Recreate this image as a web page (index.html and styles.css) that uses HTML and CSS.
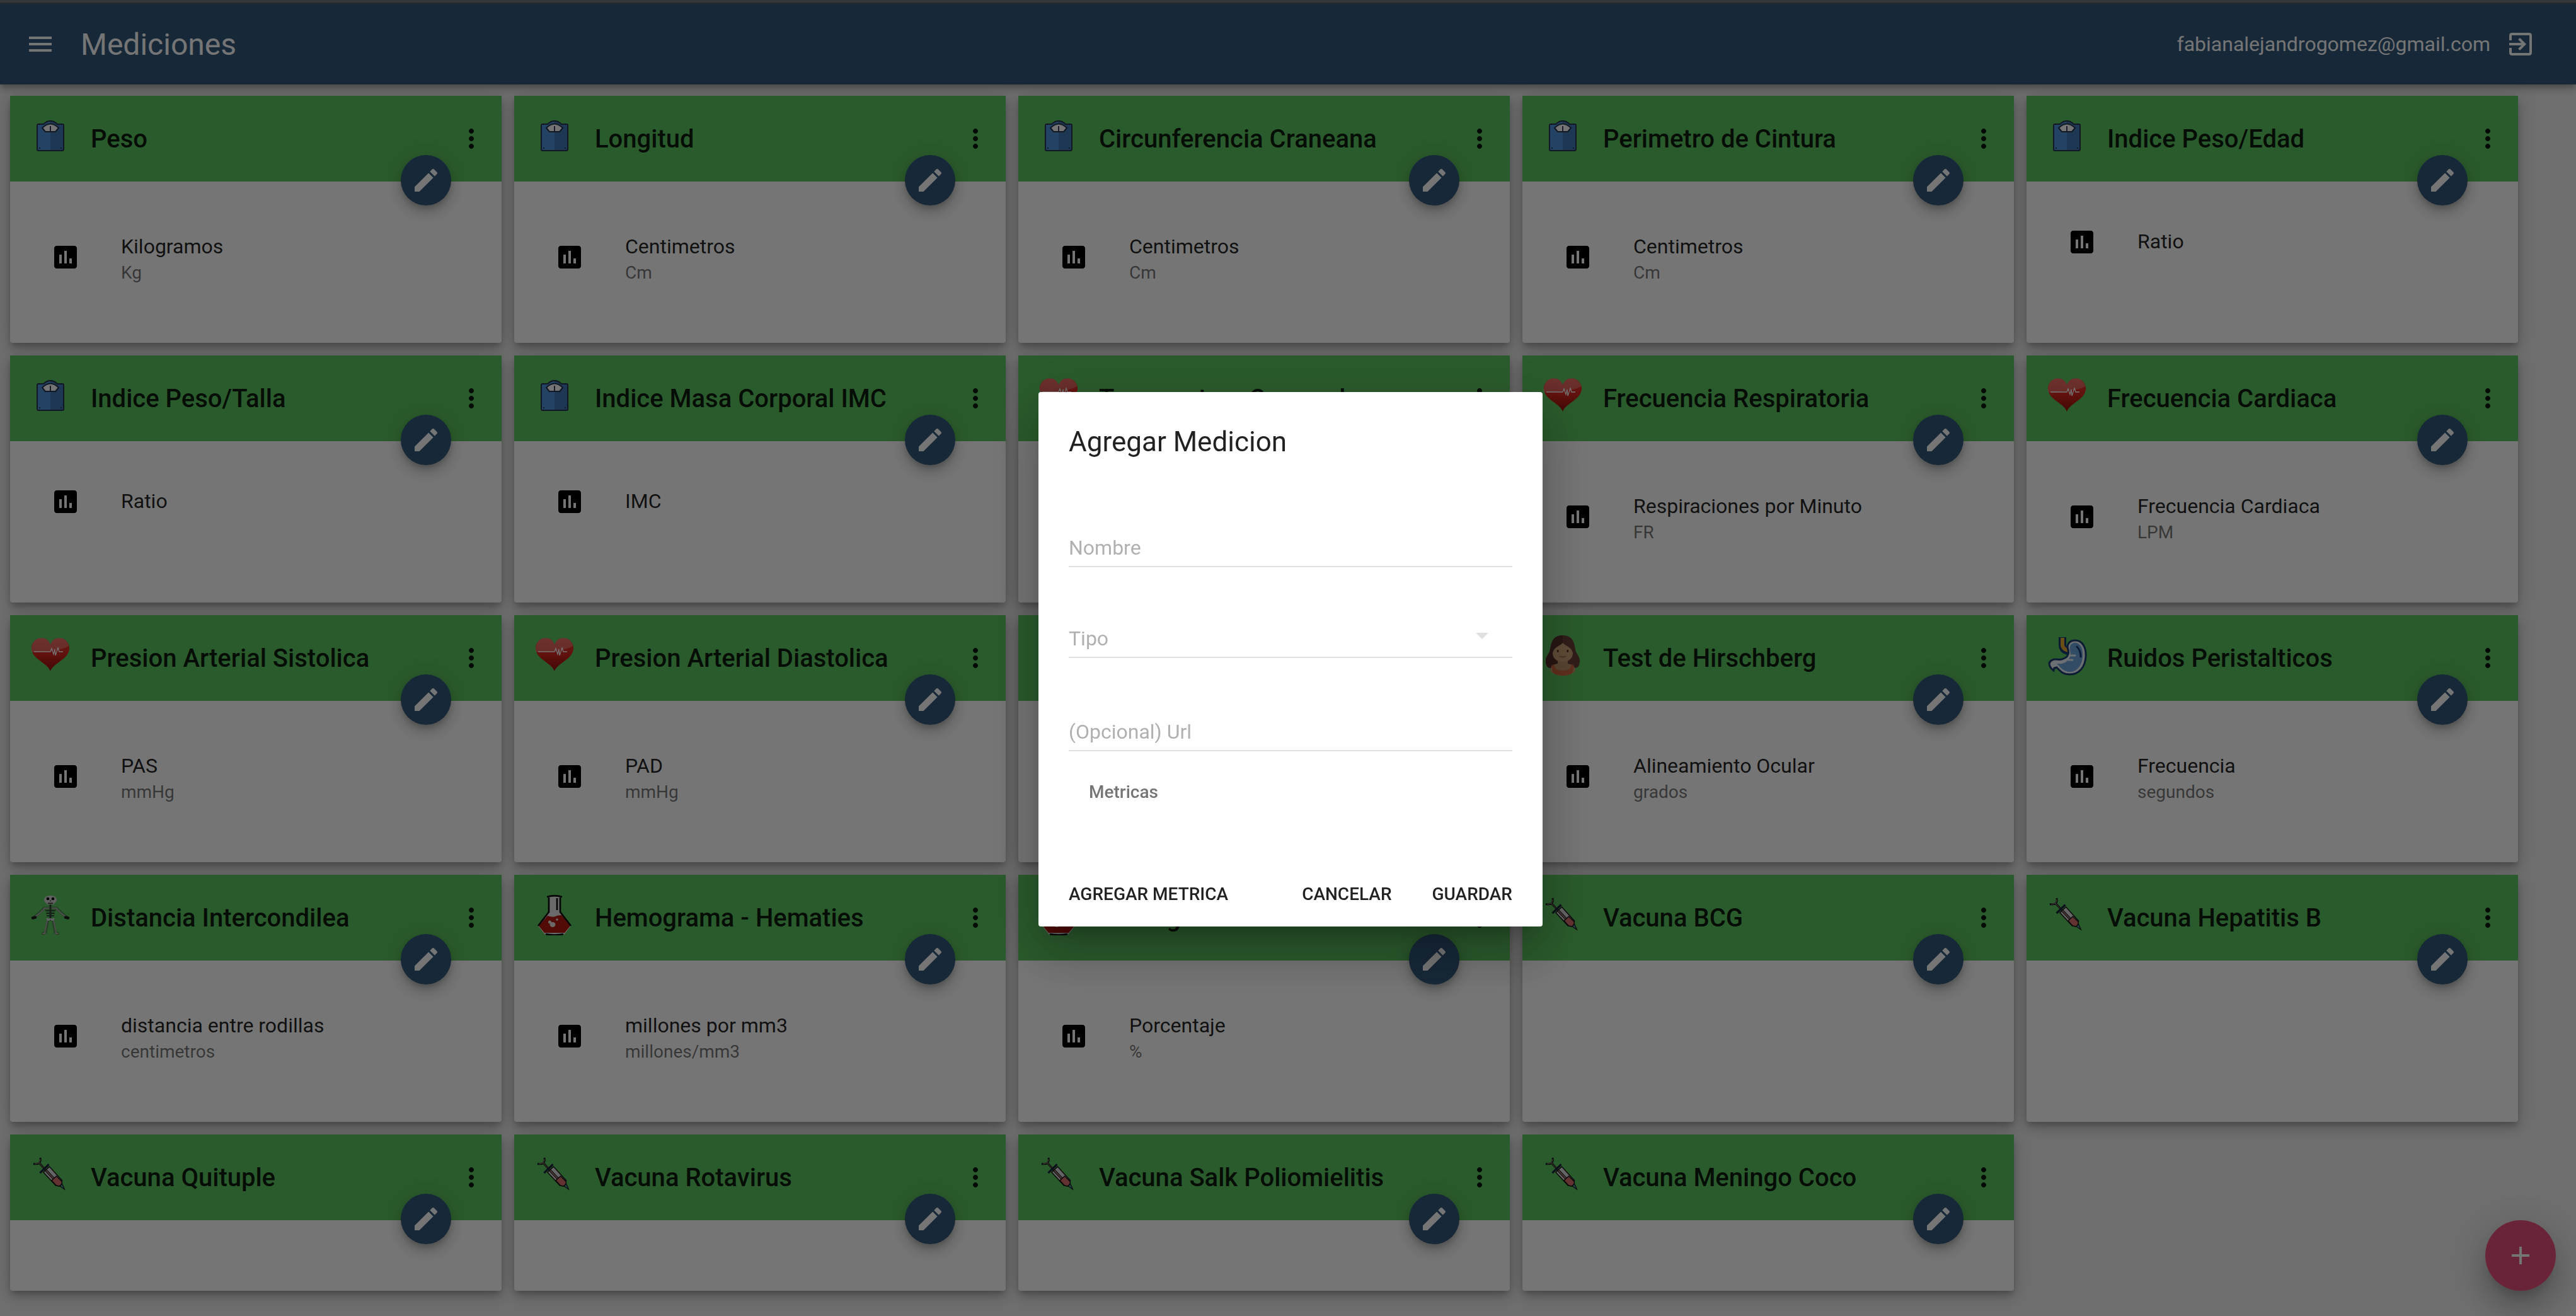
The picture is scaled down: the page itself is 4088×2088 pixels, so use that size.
FILE: index.html
```html
<!DOCTYPE html>
<html lang="es">
<head>
<meta charset="utf-8">
<title>Mediciones</title>
<link rel="stylesheet" href="styles.css">
</head>
<body>
<svg class="sprite" aria-hidden="true">
  <symbol id="menu" viewBox="0 0 24 24"><path d="M3 18h18v-2H3v2zm0-5h18v-2H3v2zm0-7v2h18V6H3z"/></symbol>
  <symbol id="exit" viewBox="0 0 24 24"><path d="M10.09 15.59L11.5 17l5-5-5-5-1.41 1.41L12.67 11H3v2h9.67l-2.58 2.59zM19 3H5c-1.11 0-2 .9-2 2v4h2V5h14v14H5v-4H3v4c0 1.1.89 2 2 2h14c1.1 0 2-.9 2-2V5c0-1.1-.9-2-2-2z"/></symbol>
  <symbol id="more" viewBox="0 0 24 24"><path d="M12 8c1.1 0 2-.9 2-2s-.9-2-2-2-2 .9-2 2 .9 2 2 2zm0 2c-1.1 0-2 .9-2 2s.9 2 2 2 2-.9 2-2-.9-2-2-2zm0 6c-1.1 0-2 .9-2 2s.9 2 2 2 2-.9 2-2-.9-2-2-2z"/></symbol>
  <symbol id="edit" viewBox="0 0 24 24"><path d="M3 17.25V21h3.75L17.81 9.94l-3.75-3.75L3 17.25zM20.71 7.04c.39-.39.39-1.02 0-1.41l-2.34-2.34c-.39-.39-1.02-.39-1.41 0l-1.83 1.83 3.75 3.75 1.83-1.83z"/></symbol>
  <symbol id="chart" viewBox="0 0 24 24"><path d="M19 3H5c-1.1 0-2 .9-2 2v14c0 1.1.9 2 2 2h14c1.1 0 2-.9 2-2V5c0-1.1-.9-2-2-2zM9 17H7v-7h2v7zm4 0h-2V7h2v10zm4 0h-2v-4h2v4z"/></symbol>
  <symbol id="add" viewBox="0 0 24 24"><path d="M19 13h-6v6h-2v-6H5v-2h6V5h2v6h6v2z"/></symbol>

  <symbol id="scale" viewBox="0 0 64 64">
    <path d="M13 13h8c3-3 6-5 11-5s8 2 11 5h8q2 0 2 2v38q0 2-2 2H13q-2 0-2-2V15q0-2 2-2z" fill="#5090d8"/>
    <path d="M32 8c5 0 8 2 11 5h8q2 0 2 2v38q0 2-2 2H32z" fill="#4279b8"/>
    <path d="M13 13h8c3-3 6-5 11-5s8 2 11 5h8q2 0 2 2v38q0 2-2 2H13q-2 0-2-2V15q0-2 2-2z" fill="none" stroke="#25354e" stroke-width="2"/>
    <path d="M19 19q13-13 26 0l-5 6H24z" fill="#fff" stroke="#25354e" stroke-width="2" stroke-linejoin="round"/>
    <path d="M32 16v9M15 50v2M49 50v2" stroke="#25354e" stroke-width="1.8"/>
  </symbol>
  <symbol id="heart" viewBox="0 0 64 64">
    <linearGradient id="heartRed" x1="0" y1="0" x2="0" y2="1"><stop offset="0" stop-color="#e83a30"/><stop offset=".5" stop-color="#d3261e"/><stop offset="1" stop-color="#8d120c"/></linearGradient>
    <path d="M32 57C28 44 4 39 2 22C1 14 8 4 17 4.500C26 4 30 9 32 15C34 9 38 4 47 4.500C56 4 63 14 62 22C60 39 36 44 32 57z" fill="url(#heartRed)"/>
    <path d="M2 25C1 14 8 4 17 4.500C26 4 30 9 32 15C34 9 38 4 47 4.500C54 4 60 11 61 17C46 26 25 24 2 27z" fill="#fff" opacity=".25"/>
    <path d="M6 26h26l2-5 3 9 2-8 1 10 4-12 2 6h6" fill="none" stroke="#fff" stroke-width="1.300"/>
  </symbol>
  <symbol id="girl" viewBox="0 0 64 64">
    <path d="M32 0C18 0 14 9 12 22c-1 8-7 10-7 18 0 5 1 12 8 12h38c7 0 8-7 8-12 0-8-6-10-7-18C50 9 46 0 32 0z" fill="#6a4038"/>
    <path d="M32 0C18 0 14 9 12 22c-1 8-7 10-7 18 0 5 1 12 8 12h19z" fill="#55302c"/>
    <path d="M24 36h16v9q12 1 12 12-8 7-20 7t-20-7q0-11 12-12z" fill="#c0946a"/>
    <path d="M32 12C28 17 18 18 16 28c0 10 8 14 16 14s16-4 16-14C46 18 36 17 32 12z" fill="#cfa478"/>
    <path d="M18 46c2 7 3 10 14 10s12-3 14-10l4 2-3 12q-6 4-15 4t-15-4l-3-12z" fill="#d0663c"/>
    <path d="M27 33q5 3 10 0" fill="none" stroke="#a0704c" stroke-width="2"/>
    <ellipse cx="24.200" cy="25" rx="1.300" ry="2" fill="#38201c"/><ellipse cx="39.800" cy="25" rx="1.300" ry="2" fill="#38201c"/>
  </symbol>
  <symbol id="stomach" viewBox="0 0 64 64">
    <path d="M25 3v12q0 8 9 10" fill="none" stroke="#1c3b72" stroke-width="12"/>
    <path d="M25 4v12q1 6 9 8" fill="none" stroke="#e8ab36" stroke-width="6"/>
    <path d="M34 23C31 15 36 8 45 8c12 0 18 12 17 26C61 52 50 62 37 62c-12 0-15-5-21-11l-4 1-1 4C7 53 4 50 4 44c5-10 14-4 20-6 8-2 12-7 10-15z" fill="#eef3fa" stroke="#1c3b72" stroke-width="3"/>
    <path d="M37 24c-2-8 4-13 9-12 9 1 12 11 11 22-1 15-10 24-20 24-10 0-15-7-21-13 9 1 14-1 18-6 3-3 5-9 3-15z" fill="#6ba5da"/>
    <path d="M48 18q6 6 6 16" fill="none" stroke="#1c3b72" stroke-width="3" stroke-linecap="round"/>
    <path d="M36 32h9M35 39h6" stroke="#eef3fa" stroke-width="3" stroke-linecap="round"/>
  </symbol>
  <symbol id="skeleton" viewBox="0 0 64 64">
    <g fill="none" stroke-linecap="round" stroke-linejoin="round">
      <path d="M32 15v24M22 21h20M22 21l-9 9-8 6M42 21l9 9 8 6M28 40l-4 20-4 1M36 40l4 20 4 1" stroke="#4a8a4e" stroke-width="4.500"/>
      <path d="M25 25h14M26 29h12M27 33h10M32 15v24" stroke="#34423a" stroke-width="2"/>
      <path d="M22 21h7M35 21h7M22 22l-8 8-6 4M42 22l8 8 6 4M27 41l-2 9-2 10M37 41l2 9 2 10M20 61h4M40 61h4M28 38h8" stroke="#a4aaa4" stroke-width="2.200"/>
      <path d="M4 36.500l4-1M56 35.500l4 1" stroke="#1c241e" stroke-width="4.500"/>
    </g>
    <path d="M32 1c-7 0-10 3-10 7 0 3 3 4 5 7h10c2-3 5-4 5-7 0-4-3-7-10-7z" fill="#d2d2d2"/>
    <circle cx="28" cy="6" r="2.300"/><circle cx="36" cy="6" r="2.300"/><path d="M31 10l1-2 1 2zM28 12.500h8v1.200h-8z"/>
    <path d="M25 37h14l-2 4h-3l-2-2-2 2h-3z" fill="#d2d2d2"/>
  </symbol>
  <symbol id="flask" viewBox="0 0 64 64">
    <path d="M22 2h20v3h-1v22l17 22-10 13q-16 4-32 0L6 49l17-22V5h-1z" fill="#e6e6e6"/>
    <path d="M21 33q8 3 12 1t10-2l14 17-9 11H16L7 49z" fill="#b4180f"/>
    <path d="M23 4v23L6 49M41 4v23l17 22M36 5v19" fill="none" stroke="#0a0a0a" stroke-width="2.600"/>
    <path d="M20 3q12-3.500 24 0M18 62q14 3 28 0" fill="none" stroke="#0a0a0a" stroke-width="2.600"/>
    <ellipse cx="29" cy="47" rx="4.500" ry="4" fill="#e6e6e6"/><circle cx="24.500" cy="43" r="2.500" fill="#e6e6e6"/><circle cx="36" cy="39" r="1.700" fill="#e6e6e6"/>
  </symbol>
  <symbol id="syringe" viewBox="0 0 64 64">
    <path d="M5 14.500q6 1 9-1t2-8.500M14 13l11 12" fill="none" stroke="#141414" stroke-width="3"/>
    <path d="M7 14.500q5 0 7-1.500t2-6M14 13l11 12" fill="none" stroke="#a98c90" stroke-width="1"/>
    <path d="M21 28l9.500-9 20 22-1 6-3 3-6-1z" fill="#dcdcdc" stroke="#141414" stroke-width="1.500"/>
    <path d="M25 25l15 16" stroke="#141414" stroke-width="4"/><path d="M25 25l15 16" stroke="#c98c8c" stroke-width="1.600"/>
    <path d="M34 41l7.500-7 9 9-1 4-3 3-5-1z" fill="#d8706e" stroke="#141414" stroke-width="1.300"/>
    <path d="M47 50l3.500-4 4 9z" fill="#4e93a8" stroke="#141414" stroke-width="1.200"/>
    <path d="M15.500 29L29.500 15.500" stroke="#18263a" stroke-width="3.200"/>
  </symbol>
</svg>

<div class="browser-edge"></div>
<header class="toolbar">
  <svg class="icon"><use href="#menu"/></svg>
  <h1 class="toolbar-title">Mediciones</h1>
  <span class="toolbar-user">fabianalejandrogomez@gmail.com</span>
  <svg class="icon"><use href="#exit"/></svg>
</header>

<main class="grid">
  <article class="card"><header class="card-head"><svg class="avatar"><use href="#scale"/></svg><h2>Peso</h2><svg class="icon"><use href="#more"/></svg><button class="edit"><svg class="icon"><use href="#edit"/></svg></button></header>
    <div class="metric"><svg class="icon"><use href="#chart"/></svg><div><p>Kilogramos</p><small>Kg</small></div></div></article>
  <article class="card"><header class="card-head"><svg class="avatar"><use href="#scale"/></svg><h2>Longitud</h2><svg class="icon"><use href="#more"/></svg><button class="edit"><svg class="icon"><use href="#edit"/></svg></button></header>
    <div class="metric"><svg class="icon"><use href="#chart"/></svg><div><p>Centimetros</p><small>Cm</small></div></div></article>
  <article class="card"><header class="card-head"><svg class="avatar"><use href="#scale"/></svg><h2>Circunferencia Craneana</h2><svg class="icon"><use href="#more"/></svg><button class="edit"><svg class="icon"><use href="#edit"/></svg></button></header>
    <div class="metric"><svg class="icon"><use href="#chart"/></svg><div><p>Centimetros</p><small>Cm</small></div></div></article>
  <article class="card"><header class="card-head"><svg class="avatar"><use href="#scale"/></svg><h2>Perimetro de Cintura</h2><svg class="icon"><use href="#more"/></svg><button class="edit"><svg class="icon"><use href="#edit"/></svg></button></header>
    <div class="metric"><svg class="icon"><use href="#chart"/></svg><div><p>Centimetros</p><small>Cm</small></div></div></article>
  <article class="card"><header class="card-head"><svg class="avatar"><use href="#scale"/></svg><h2>Indice Peso/Edad</h2><svg class="icon"><use href="#more"/></svg><button class="edit"><svg class="icon"><use href="#edit"/></svg></button></header>
    <div class="metric single"><svg class="icon"><use href="#chart"/></svg><div><p>Ratio</p></div></div></article>

  <article class="card"><header class="card-head"><svg class="avatar"><use href="#scale"/></svg><h2>Indice Peso/Talla</h2><svg class="icon"><use href="#more"/></svg><button class="edit"><svg class="icon"><use href="#edit"/></svg></button></header>
    <div class="metric single"><svg class="icon"><use href="#chart"/></svg><div><p>Ratio</p></div></div></article>
  <article class="card"><header class="card-head"><svg class="avatar"><use href="#scale"/></svg><h2>Indice Masa Corporal IMC</h2><svg class="icon"><use href="#more"/></svg><button class="edit"><svg class="icon"><use href="#edit"/></svg></button></header>
    <div class="metric single"><svg class="icon"><use href="#chart"/></svg><div><p>IMC</p></div></div></article>
  <article class="card"><header class="card-head"><svg class="avatar"><use href="#heart"/></svg><h2>Temperatura Corporal</h2><svg class="icon"><use href="#more"/></svg></header></article>
  <article class="card"><header class="card-head"><svg class="avatar"><use href="#heart"/></svg><h2>Frecuencia Respiratoria</h2><svg class="icon"><use href="#more"/></svg><button class="edit"><svg class="icon"><use href="#edit"/></svg></button></header>
    <div class="metric"><svg class="icon"><use href="#chart"/></svg><div><p>Respiraciones por Minuto</p><small>FR</small></div></div></article>
  <article class="card"><header class="card-head"><svg class="avatar"><use href="#heart"/></svg><h2>Frecuencia Cardiaca</h2><svg class="icon"><use href="#more"/></svg><button class="edit"><svg class="icon"><use href="#edit"/></svg></button></header>
    <div class="metric"><svg class="icon"><use href="#chart"/></svg><div><p>Frecuencia Cardiaca</p><small>LPM</small></div></div></article>

  <article class="card"><header class="card-head"><svg class="avatar"><use href="#heart"/></svg><h2>Presion Arterial Sistolica</h2><svg class="icon"><use href="#more"/></svg><button class="edit"><svg class="icon"><use href="#edit"/></svg></button></header>
    <div class="metric"><svg class="icon"><use href="#chart"/></svg><div><p>PAS</p><small>mmHg</small></div></div></article>
  <article class="card"><header class="card-head"><svg class="avatar"><use href="#heart"/></svg><h2>Presion Arterial Diastolica</h2><svg class="icon"><use href="#more"/></svg><button class="edit"><svg class="icon"><use href="#edit"/></svg></button></header>
    <div class="metric"><svg class="icon"><use href="#chart"/></svg><div><p>PAD</p><small>mmHg</small></div></div></article>
  <article class="card"><header class="card-head"></header></article>
  <article class="card"><header class="card-head"><svg class="avatar"><use href="#girl"/></svg><h2>Test de Hirschberg</h2><svg class="icon"><use href="#more"/></svg><button class="edit"><svg class="icon"><use href="#edit"/></svg></button></header>
    <div class="metric"><svg class="icon"><use href="#chart"/></svg><div><p>Alineamiento Ocular</p><small>grados</small></div></div></article>
  <article class="card"><header class="card-head"><svg class="avatar"><use href="#stomach"/></svg><h2>Ruidos Peristalticos</h2><svg class="icon"><use href="#more"/></svg><button class="edit"><svg class="icon"><use href="#edit"/></svg></button></header>
    <div class="metric"><svg class="icon"><use href="#chart"/></svg><div><p>Frecuencia</p><small>segundos</small></div></div></article>

  <article class="card"><header class="card-head"><svg class="avatar"><use href="#skeleton"/></svg><h2>Distancia Intercondilea</h2><svg class="icon"><use href="#more"/></svg><button class="edit"><svg class="icon"><use href="#edit"/></svg></button></header>
    <div class="metric"><svg class="icon"><use href="#chart"/></svg><div><p>distancia entre rodillas</p><small>centimetros</small></div></div></article>
  <article class="card"><header class="card-head"><svg class="avatar"><use href="#flask"/></svg><h2>Hemograma - Hematies</h2><svg class="icon"><use href="#more"/></svg><button class="edit"><svg class="icon"><use href="#edit"/></svg></button></header>
    <div class="metric"><svg class="icon"><use href="#chart"/></svg><div><p>millones por mm3</p><small>millones/mm3</small></div></div></article>
  <article class="card"><header class="card-head"><svg class="avatar"><use href="#flask"/></svg><h2>Hemograma - Hematocrito</h2><svg class="icon"><use href="#more"/></svg><button class="edit"><svg class="icon"><use href="#edit"/></svg></button></header>
    <div class="metric"><svg class="icon"><use href="#chart"/></svg><div><p>Porcentaje</p><small>%</small></div></div></article>
  <article class="card"><header class="card-head"><svg class="avatar"><use href="#syringe"/></svg><h2>Vacuna BCG</h2><svg class="icon"><use href="#more"/></svg><button class="edit"><svg class="icon"><use href="#edit"/></svg></button></header></article>
  <article class="card"><header class="card-head"><svg class="avatar"><use href="#syringe"/></svg><h2>Vacuna Hepatitis B</h2><svg class="icon"><use href="#more"/></svg><button class="edit"><svg class="icon"><use href="#edit"/></svg></button></header></article>

  <article class="card"><header class="card-head"><svg class="avatar"><use href="#syringe"/></svg><h2>Vacuna Quituple</h2><svg class="icon"><use href="#more"/></svg><button class="edit"><svg class="icon"><use href="#edit"/></svg></button></header></article>
  <article class="card"><header class="card-head"><svg class="avatar"><use href="#syringe"/></svg><h2>Vacuna Rotavirus</h2><svg class="icon"><use href="#more"/></svg><button class="edit"><svg class="icon"><use href="#edit"/></svg></button></header></article>
  <article class="card"><header class="card-head"><svg class="avatar"><use href="#syringe"/></svg><h2>Vacuna Salk Poliomielitis</h2><svg class="icon"><use href="#more"/></svg><button class="edit"><svg class="icon"><use href="#edit"/></svg></button></header></article>
  <article class="card"><header class="card-head"><svg class="avatar"><use href="#syringe"/></svg><h2>Vacuna Meningo Coco</h2><svg class="icon"><use href="#more"/></svg><button class="edit"><svg class="icon"><use href="#edit"/></svg></button></header></article>
</main>

<button class="fab"><svg class="icon"><use href="#add"/></svg></button>

<div class="backdrop">
  <section class="dialog">
    <h2 class="dialog-title">Agregar Medicion</h2>
    <div class="field">Nombre</div>
    <div class="field select">Tipo<span class="caret"></span></div>
    <div class="field url">(Opcional) Url</div>
    <h3 class="dialog-sub">Metricas</h3>
    <footer class="dialog-actions"><span>AGREGAR METRICA</span><span class="push">CANCELAR</span><span>GUARDAR</span></footer>
  </section>
</div>
</body>
</html>
```
FILE: styles.css
```css
* { box-sizing: border-box; }
body {
  margin: 0;
  height: 2088px;
  overflow: hidden;
  background: #f0f0f0;
  font-family: Roboto, "Liberation Sans", sans-serif;
  color: rgba(0, 0, 0, .87);
}
h1, h2, h3, p { margin: 0; }
button { border: 0; padding: 0; }
.sprite { position: absolute; width: 0; height: 0; }
.icon { width: 48px; height: 48px; fill: currentColor; flex: none; }

.browser-edge {
  position: relative;
  z-index: 30;
  height: 6px;
  background: #35363a;
  border-bottom: 2px solid #26292b;
}

.toolbar {
  position: relative;
  height: 128px;
  padding: 0 64px 0 40px;
  display: flex;
  align-items: center;
  background: #32577a;
  color: #fff;
  box-shadow: 0 4px 8px -2px rgba(0,0,0,.2), 0 8px 10px rgba(0,0,0,.14), 0 2px 20px rgba(0,0,0,.12);
}
.toolbar-title { margin-left: 40px; font-size: 48px; font-weight: 400; }
.toolbar-user { margin-left: auto; margin-right: 24px; font-size: 32px; }

.grid {
  padding: 18px 0 0 16px;
  display: grid;
  grid-template-columns: repeat(5, 780px);
  grid-template-rows: repeat(4, 392px) 248px;
  gap: 20px;
}
.card {
  background: #fff;
  border-radius: 4px;
  box-shadow: 0 6px 10px -2px rgba(0,0,0,.2), 0 10px 18px rgba(0,0,0,.14), 0 2px 32px rgba(0,0,0,.12);
}
.card-head {
  position: relative;
  height: 136px;
  padding: 0 24px 0 32px;
  display: flex;
  align-items: center;
  background: #5dc660;
}
.avatar { width: 64px; height: 64px; margin: 0 32px 8px 0; flex: none; }
.card-head h2 { flex: 1; font-size: 40px; font-weight: 500; white-space: nowrap; }
.edit, .fab { display: grid; place-items: center; border-radius: 50%; color: #fff; }
.edit {
  position: absolute;
  right: 80px;
  bottom: -38px;
  width: 80px;
  height: 80px;
  background: #32577a;
  box-shadow: 0 6px 10px -2px rgba(0,0,0,.2), 0 12px 20px rgba(0,0,0,.14), 0 2px 36px rgba(0,0,0,.12);
}
.metric {
  margin-top: 48px;
  height: 144px;
  padding-left: 64px;
  display: flex;
  align-items: center;
  gap: 64px;
}
.metric .icon { color: #000; }
.metric p { font-size: 32px; line-height: 42px; }
.metric small { display: block; font-size: 28px; line-height: 42px; color: rgba(0,0,0,.54); }
.metric > div { padding-top: 8px; }
.metric.single { height: 96px; }
.metric.single > div { padding: 0 0 2px; }

.fab {
  position: fixed;
  right: 32px;
  bottom: 40px;
  width: 112px;
  height: 112px;
  background: #e64f7a;
  box-shadow: 0 16px 20px -10px rgba(0,0,0,.2), 0 32px 48px 4px rgba(0,0,0,.14), 0 12px 60px 10px rgba(0,0,0,.12);
}

.backdrop {
  position: fixed;
  inset: 0;
  z-index: 20;
  padding: 4px 0 0 8px;
  display: grid;
  place-items: center;
  background: rgba(0, 0, 0, .54);
}
.dialog {
  width: 800px;
  height: 848px;
  padding: 0 48px;
  display: flex;
  flex-direction: column;
  background: #fff;
  border-radius: 4px;
  box-shadow: 0 22px 30px -14px rgba(0,0,0,.2), 0 48px 76px 6px rgba(0,0,0,.14), 0 18px 92px 16px rgba(0,0,0,.12);
}
.dialog-title { font-size: 44px; font-weight: 400; line-height: 158px; }
.field {
  height: 64px;
  margin-top: 56px;
  padding-top: 4px;
  display: flex;
  align-items: center;
  font-size: 32px;
  color: #b0b0b0;
  border-bottom: 2px solid #e0e0e0;
}
.field.select { margin-top: 80px; justify-content: space-between; }
.field.url { margin-top: 84px; }
.caret {
  margin: 0 38px 8px 0;
  border: 10px solid transparent;
  border-top-color: #e0e0e0;
  border-bottom: 0;
}
.dialog-sub { padding-left: 32px; font-size: 28px; font-weight: 500; line-height: 130px; color: #757575; }
.dialog-actions {
  margin-top: auto;
  height: 104px;
  display: flex;
  align-items: center;
  gap: 64px;
  font-size: 28px;
  font-weight: 500;
}
.push { margin-left: auto; }
```
